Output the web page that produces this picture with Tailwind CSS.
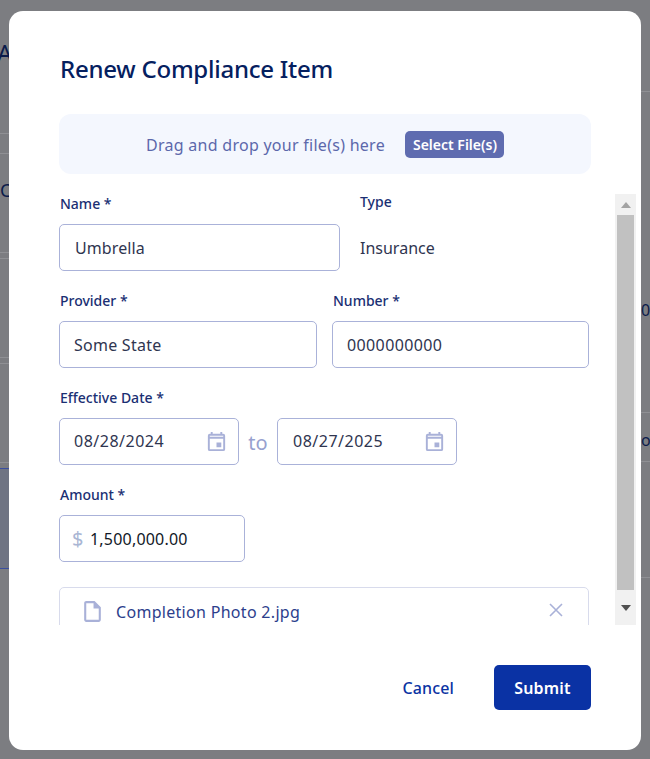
<!DOCTYPE html>
<html>
<head>
<meta charset="utf-8">
<script src="https://cdn.jsdelivr.net/npm/@tailwindcss/browser@4"></script>
</head>
<body class="m-0 bg-[#7c7d81] font-['Noto_Sans',sans-serif]">
<div class="relative h-[759px] w-[650px] overflow-hidden bg-[#7c7d81]">
  <!-- dimmed page behind -->
  <div class="absolute left-[-3px] top-[41px] text-[24px] leading-[24px] text-[#0b1b4a]">A</div>
  <div class="absolute left-0 top-[178px] text-[18px] leading-[24px] text-[#0b1b4a]">C</div>
  <div class="absolute left-0 top-[133px] h-px w-[10px] bg-[#8f9094]"></div>
  <div class="absolute left-0 top-[153px] h-px w-[10px] bg-[#8f9094]"></div>
  <div class="absolute left-0 top-[252px] h-px w-[10px] bg-[#8f9094]"></div>
  <div class="absolute left-0 top-[258px] h-px w-[10px] bg-[#8f9094]"></div>
  <div class="absolute left-0 top-[357px] h-px w-[10px] bg-[#8f9094]"></div>
  <div class="absolute left-0 top-[363px] h-px w-[10px] bg-[#8f9094]"></div>
  <div class="absolute left-0 top-[462px] h-px w-[10px] bg-[#8f9094]"></div>
  <div class="absolute left-0 top-[468px] h-[101px] w-[10px] border-y border-[#3b4fa0] bg-[#6f7483]"></div>
  <div class="absolute left-[641px] top-[298px] text-[16px] leading-[24px] text-[#0b1b4a]">0</div>
  <div class="absolute left-[641px] top-[428px] text-[16px] leading-[24px] text-[#0b1b4a]">o</div>
  <div class="absolute left-[641px] top-[91px] h-px w-[9px] bg-[#8f9094]"></div>
  <div class="absolute left-[641px] top-[412px] h-px w-[9px] bg-[#8f9094]"></div>
  <div class="absolute left-[641px] top-[461px] h-px w-[9px] bg-[#8f9094]"></div>
  <div class="absolute left-[641px] top-[577px] h-px w-[9px] bg-[#8f9094]"></div>

  <!-- modal -->
  <div class="absolute left-[9px] top-[11px] flex h-[739px] w-[632px] flex-col rounded-[14px] bg-white pt-[39px]">
    <h2 class="ml-[51px] text-[24px] font-medium leading-[38px] tracking-[-0.24px] text-[#05205f]">Renew Compliance Item</h2>

    <div class="ml-[50px] mt-[26px] flex h-[60px] w-[532px] items-center justify-center gap-[20px] rounded-[12px] bg-[#f4f7fe]">
      <span class="pt-[1px] text-[16px] tracking-[0.27px] text-[#5c68ab]">Drag and drop your file(s) here</span>
      <span class="rounded-[5px] bg-[#5f6cb0] py-[3px] pl-[8px] pr-[7px] text-[14px] font-semibold leading-[21px] text-white">Select File(s)</span>
    </div>

    <div class="mt-[14px] flex h-[437px] w-[627px]">
      <div class="ml-[50px] w-[530px] overflow-hidden">
        <div class="flex pt-[6px]">
          <div class="w-[281px]">
            <div class="pl-[1px] text-[14px] font-medium leading-[20px] text-[#1a2f73]">Name *</div>
            <div class="mt-[10px] flex h-[47px] items-center rounded-[5px] border border-[#aab2d9] px-[15px] text-[16px] tracking-[0.1px] text-[#2f3550]">Umbrella</div>
          </div>
          <div class="ml-[20px]">
            <div class="mt-[-2px] text-[14px] font-medium leading-[20px] text-[#1a2f73]">Type</div>
            <div class="mt-[12px] flex h-[47px] items-center text-[16px] text-[#2f3550]">Insurance</div>
          </div>
        </div>
        <div class="mt-[20px] flex gap-[15px]">
          <div class="w-[258px]">
            <div class="pl-[1px] text-[14px] font-medium leading-[20px] text-[#1a2f73]">Provider *</div>
            <div class="mt-[10px] flex h-[47px] items-center rounded-[5px] border border-[#aab2d9] pl-[14px] pr-[15px] text-[16px] tracking-[0.25px] text-[#2f3550]">Some State</div>
          </div>
          <div class="w-[257px]">
            <div class="pl-[1px] text-[14px] font-medium leading-[20px] text-[#1a2f73]">Number *</div>
            <div class="mt-[10px] flex h-[47px] items-center rounded-[5px] border border-[#aab2d9] pl-[14px] pr-[15px] text-[16px] tracking-[0.38px] text-[#2f3550]">0000000000</div>
          </div>
        </div>
        <div class="mt-[20px] pl-[1px] text-[14px] font-medium leading-[20px] text-[#1a2f73]">Effective Date *</div>
        <div class="mt-[10px] flex items-center">
          <div class="flex h-[47px] w-[180px] items-center justify-between rounded-[5px] border border-[#aab2d9] pl-[14px] pr-[10px] text-[16px] tracking-[0.5px] text-[#2f3550]">
            <span class="pb-[2px]">08/28/2024</span>
            <svg width="23" height="23" viewBox="0 0 24 24" fill="#a9b1d8"><path d="M19 4h-1V2h-2v2H8V2H6v2H5a2 2 0 0 0-2 2v14a2 2 0 0 0 2 2h14a2 2 0 0 0 2-2V6a2 2 0 0 0-2-2zm0 16H5V9h14v11zM5 7V6h14v1H5zm7 6h5v5h-5z"/></svg>
          </div>
          <span class="w-[38px] pt-[3px] text-center text-[20px] leading-[28px] text-[#98a1cf]">to</span>
          <div class="flex h-[47px] w-[180px] items-center justify-between rounded-[5px] border border-[#aab2d9] pl-[15px] pr-[10px] text-[16px] tracking-[0.5px] text-[#2f3550]">
            <span class="pb-[2px]">08/27/2025</span>
            <svg width="23" height="23" viewBox="0 0 24 24" fill="#a9b1d8"><path d="M19 4h-1V2h-2v2H8V2H6v2H5a2 2 0 0 0-2 2v14a2 2 0 0 0 2 2h14a2 2 0 0 0 2-2V6a2 2 0 0 0-2-2zm0 16H5V9h14v11zM5 7V6h14v1H5zm7 6h5v5h-5z"/></svg>
          </div>
        </div>
        <div class="mt-[20px] pl-[1px] text-[14px] font-medium leading-[20px] text-[#1a2f73]">Amount *</div>
        <div class="mt-[10px] flex h-[47px] w-[186px] items-center rounded-[5px] border border-[#aab2d9] pl-[12px] text-[16px] tracking-[0.2px] text-[#111827]">
          <span class="w-[18px] text-[20px] leading-[28px] text-[#a9b6d4]">$</span><span>1,500,000.00</span>
        </div>
        <div class="mt-[25px] flex h-[60px] items-start rounded-[5px] border border-[#d8dbec] pl-[20px] pr-[23px] pt-[11px]">
          <svg width="25" height="25" viewBox="0 0 24 24" fill="#a9b1d8"><path d="M14 2H6c-1.1 0-1.99.9-1.99 2L4 20c0 1.1.89 2 1.99 2H18c1.1 0 2-.9 2-2V8l-6-6zM6 20V4h7v5h5v11H6z"/></svg>
          <span class="ml-[11px] mt-[1px] flex-1 text-[16px] leading-[25px] tracking-[0.3px] text-[#2c3e8c]">Completion Photo 2.jpg</span>
          <svg class="mt-[2px]" width="18" height="18" viewBox="0 0 18 18" stroke="#a9b1d8" stroke-width="1.6"><path d="M3 3l12 12M15 3L3 15"/></svg>
        </div>
      </div>
      <!-- scrollbar -->
      <div class="ml-[26px] mt-[6px] flex w-[21px] flex-col items-center bg-[#f1f1f1]">
        <div class="flex h-[21px] w-full items-center justify-center">
          <svg width="10" height="6" viewBox="0 0 10 6" fill="#a3a3a3"><path d="M5 0l5 6H0z"/></svg>
        </div>
        <div class="h-[375px] w-[17px] bg-[#c1c1c1]"></div>
        <div class="flex flex-1 items-center justify-center">
          <svg width="10" height="6" viewBox="0 0 10 6" fill="#505050"><path d="M0 0h10L5 6z"/></svg>
        </div>
      </div>
    </div>

    <div class="mt-[40px] flex w-[582px] items-center justify-end gap-[40px]">
      <span class="text-[16px] font-medium tracking-[0.15px] text-[#0a33a3]">Cancel</span>
      <button class="h-[45px] w-[97px] rounded-[5px] bg-[#0a32a4] text-[16px] font-semibold tracking-[0.2px] text-white">Submit</button>
    </div>
  </div>
</div>
</body>
</html>
